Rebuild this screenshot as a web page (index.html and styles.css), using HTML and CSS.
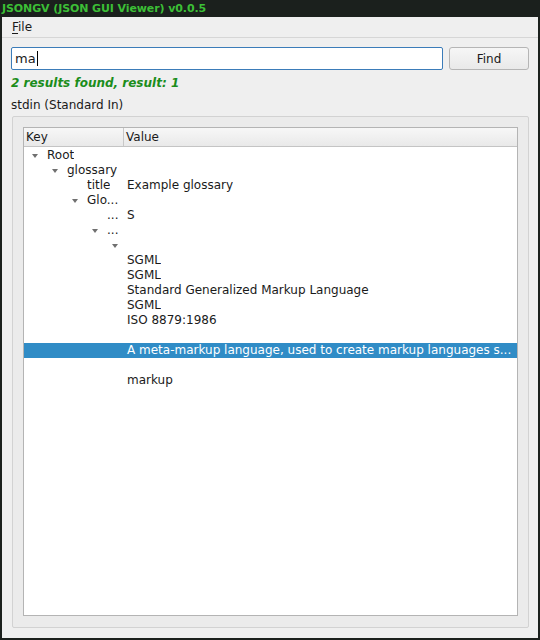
FILE: index.html
```html
<!DOCTYPE html>
<html>
<head>
<meta charset="utf-8">
<link rel="stylesheet" href="styles.css">
</head>
<body>
<div class="window">
  <div class="titlebar">JSONGV (JSON GUI Viewer) v0.0.5</div>
  <div class="menubar"><span class="menu"><u>F</u>ile</span></div>
  <div class="content">
    <div class="search-row">
      <div class="input">ma<span class="caret"></span></div>
      <button class="btn">Find</button>
    </div>
    <div class="status">2 results found, result: 1</div>
    <div class="source">stdin (Standard In)</div>
    <div class="group">
      <div class="tree">
        <div class="header">
          <div class="hcell key">Key</div>
          <div class="hcell">Value</div>
        </div>
        <div class="rows">
          <div class="row"><div class="k" style="--d:0"><i class="arr"></i><span>Root</span></div><div class="v"></div></div>
          <div class="row"><div class="k" style="--d:1"><i class="arr"></i><span>glossary</span></div><div class="v"></div></div>
          <div class="row"><div class="k" style="--d:2"><i></i><span>title</span></div><div class="v">Example glossary</div></div>
          <div class="row"><div class="k" style="--d:2"><i class="arr"></i><span>Glo...</span></div><div class="v"></div></div>
          <div class="row"><div class="k" style="--d:3"><i></i><span>...</span></div><div class="v">S</div></div>
          <div class="row"><div class="k" style="--d:3"><i class="arr"></i><span>...</span></div><div class="v"></div></div>
          <div class="row"><div class="k" style="--d:4"><i class="arr"></i><span></span></div><div class="v"></div></div>
          <div class="row"><div class="k"></div><div class="v">SGML</div></div>
          <div class="row"><div class="k"></div><div class="v">SGML</div></div>
          <div class="row"><div class="k"></div><div class="v">Standard Generalized Markup Language</div></div>
          <div class="row"><div class="k"></div><div class="v">SGML</div></div>
          <div class="row"><div class="k"></div><div class="v">ISO 8879:1986</div></div>
          <div class="row"><div class="k"></div><div class="v"></div></div>
          <div class="row sel"><div class="k"></div><div class="v">A meta-markup language, used to create markup languages s...</div></div>
          <div class="row"><div class="k"></div><div class="v"></div></div>
          <div class="row"><div class="k"></div><div class="v">markup</div></div>
        </div>
      </div>
    </div>
  </div>
</div>
</body>
</html>
```
FILE: styles.css
```css
* { box-sizing: border-box; }
html, body { margin: 0; padding: 0; }
body {
  width: 540px; height: 640px; overflow: hidden;
  background: #1b201d;
  font-family: "DejaVu Sans", sans-serif;
  font-size: 12px;
  color: #1a1a1a;
}
.window {
  display: flex; flex-direction: column;
  height: 640px;
  padding: 0 2px 2px 2px;
}
.titlebar {
  height: 17px;
  line-height: 17px;
  color: #3cbf36;
  font-weight: bold;
  font-size: 11px;
  letter-spacing: -0.1px;
  white-space: nowrap;
}
.menubar {
  height: 21px;
  background: #efefef;
  border-bottom: 1px solid #d6d6d6;
  padding-left: 10px;
  line-height: 20px;
  font-size: 12px;
}
.menu u { text-decoration: underline; text-underline-offset: 2px; }
.content {
  flex: 1;
  background: #efefef;
  display: flex; flex-direction: column;
  padding: 9px 9px 10px 9px;
}
.search-row {
  display: flex; gap: 6px; height: 23px;
}
.input {
  flex: 1;
  background: #fff;
  border: 1px solid #3b7cb9;
  border-radius: 2px;
  padding-left: 3px;
  line-height: 21px;
  font-size: 13px;
  display: flex; align-items: center;
}
.caret { display: inline-block; width: 1px; height: 15px; background: #000; margin-left: 1px; }
.btn {
  width: 80px;
  height: 23px;
  border: 1px solid #b5b5b5;
  border-radius: 3px;
  background: linear-gradient(#f6f6f6, #e9e9e9);
  font-family: "DejaVu Sans", sans-serif;
  font-size: 12px;
  color: #1a1a1a;
  padding: 0;
}
.status {
  margin-top: 5px;
  height: 16px;
  line-height: 16px;
  color: #1b8d1b;
  font-weight: bold;
  font-style: italic;
  font-size: 12px;
}
.source {
  margin-top: 6px;
  height: 16px;
  line-height: 16px;
}
.group {
  flex: 1;
  margin: 3px 0 0 1px;
  border: 1px solid #d2d2d2;
  border-radius: 2px;
  background: #ebebeb;
  padding: 10px 10px 11px 10px;
  display: flex;
}
.tree {
  flex: 1;
  background: #fff;
  border: 1px solid #b4b4b4;
  display: flex; flex-direction: column;
  overflow: hidden;
}
.header {
  display: flex;
  height: 19px;
  background: linear-gradient(#f7f7f7, #e9e9e9);
  border-bottom: 1px solid #c4c4c4;
  line-height: 18px;
}
.hcell { padding-left: 2px; }
.hcell.key { width: 100px; border-right: 1px solid #c8c8c8; }
.rows { padding-top: 1px; }
.row {
  display: flex;
  height: 15px;
  line-height: 15px;
  white-space: nowrap;
}
.row.sel { background: #308cc6; color: #fff; }
.k {
  width: 100px;
  padding-left: calc(var(--d, 0) * 20px + 4px);
  display: flex; align-items: center;
  overflow: hidden;
}
.k i {
  width: 19px; flex: none; height: 15px; position: relative;
}
.k i.arr::before {
  content: ""; position: absolute; left: 4px; top: 6px;
  border-left: 3.5px solid transparent;
  border-right: 3.5px solid transparent;
  border-top: 4px solid #707070;
}
.k span { overflow: hidden; }
.v { padding-left: 3px; overflow: hidden; }
```
